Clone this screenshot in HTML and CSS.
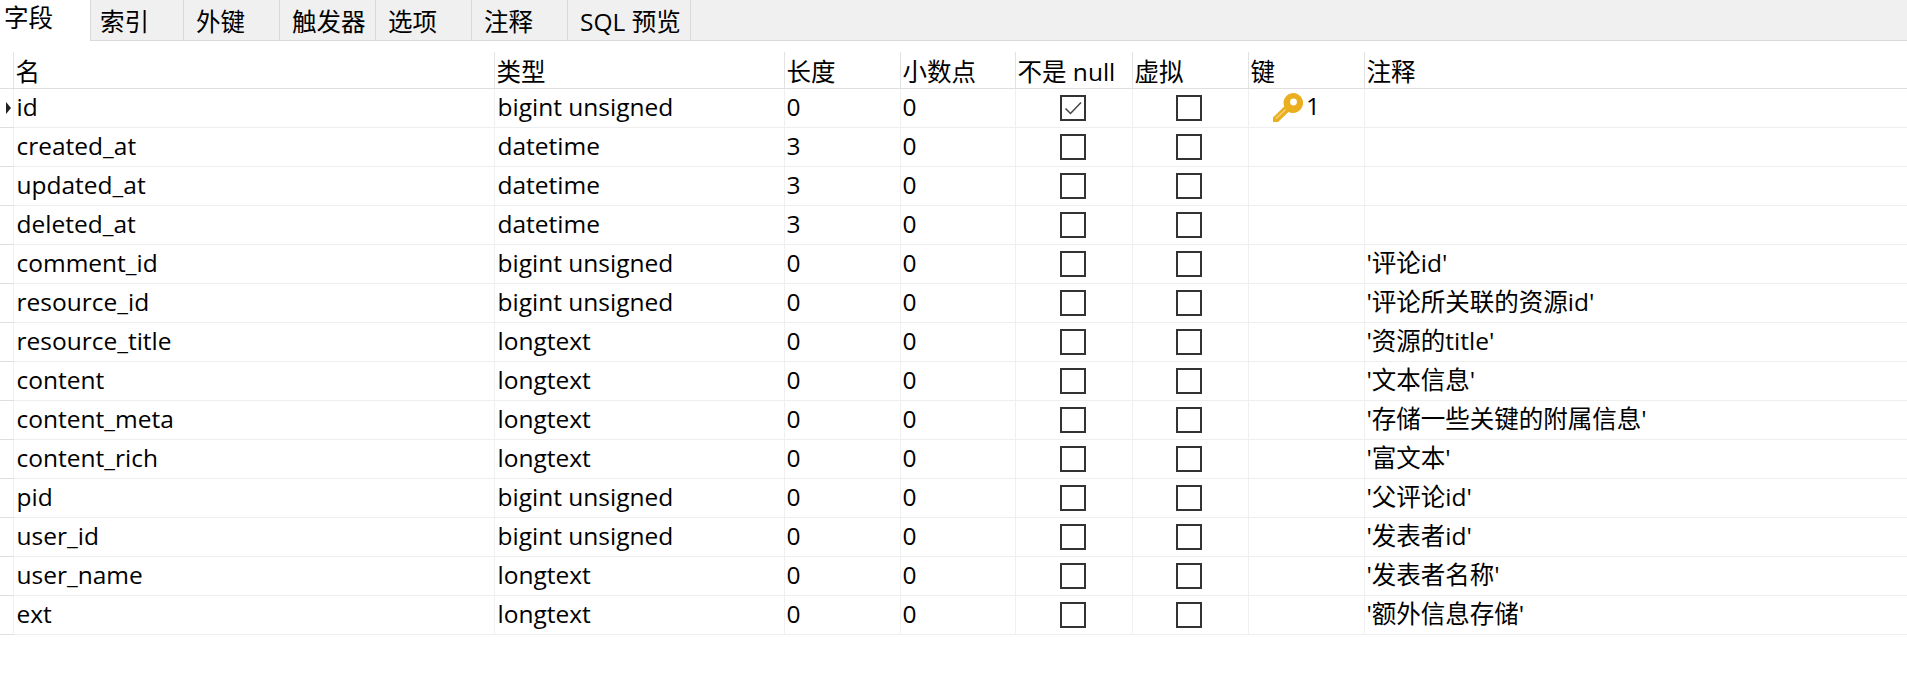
FILE: index.html
```html
<!DOCTYPE html>
<html lang="zh-CN">
<head>
  <meta charset="UTF-8" />
  <title>字段</title>
  <link rel="stylesheet" href="styles.css">
</head>
<body>
  <div class="tabs">
    <div class="tab active">字段</div>
    <div class="tab">索引</div>
    <div class="tab">外键</div>
    <div class="tab">触发器</div>
    <div class="tab">选项</div>
    <div class="tab">注释</div>
    <div class="tab wide">SQL 预览</div>
  </div>

  <table class="campos">
    <colgroup>
      <col class="c-mark"><col class="c-nome"><col class="c-tipo"><col class="c-len"><col class="c-dec">
      <col class="c-null"><col class="c-virt"><col class="c-key"><col>
    </colgroup>
    <thead>
      <tr>
        <th class="mark"></th><th>名</th><th>类型</th><th>长度</th><th>小数点</th><th>不是 null</th><th>虚拟</th><th>键</th><th>注释</th>
      </tr>
    </thead>
    <tbody>
      <tr>
        <td class="mark"><span class="seta"></span></td><td>id</td><td>bigint unsigned</td><td>0</td><td>0</td>
        <td class="chk"><span class="box"><svg width="22" height="22" viewBox="0 0 22 22"><path d="M3.5 11.5 L8.5 16.5 L19 5.5" fill="none" stroke="#444" stroke-width="1.5"/></svg></span></td>
        <td class="chk"><span class="box"></span></td>
        <td class="chave">
          <svg class="icon-key" width="30" height="29" viewBox="0 0 30 29">
            <path d="M20 0 A10 10 0 1 1 15.5 18.9 L5 29 H0 V24.5 L11.2 13.5 A10 10 0 0 1 20 0 Z" fill="#ebae1f"/>
            <circle cx="20.5" cy="9" r="3.4" fill="#fff"/>
            <path d="M3 25.5 L12.5 16.5" stroke="#f6d67e" stroke-width="1.2"/>
          </svg>
          <span>1</span>
        </td>
        <td></td>
      </tr>
      <tr><td class="mark"></td><td>created_at</td><td>datetime</td><td>3</td><td>0</td><td class="chk"><span class="box"></span></td><td class="chk"><span class="box"></span></td><td></td><td></td></tr>
      <tr><td class="mark"></td><td>updated_at</td><td>datetime</td><td>3</td><td>0</td><td class="chk"><span class="box"></span></td><td class="chk"><span class="box"></span></td><td></td><td></td></tr>
      <tr><td class="mark"></td><td>deleted_at</td><td>datetime</td><td>3</td><td>0</td><td class="chk"><span class="box"></span></td><td class="chk"><span class="box"></span></td><td></td><td></td></tr>
      <tr><td class="mark"></td><td>comment_id</td><td>bigint unsigned</td><td>0</td><td>0</td><td class="chk"><span class="box"></span></td><td class="chk"><span class="box"></span></td><td></td><td>'评论id'</td></tr>
      <tr><td class="mark"></td><td>resource_id</td><td>bigint unsigned</td><td>0</td><td>0</td><td class="chk"><span class="box"></span></td><td class="chk"><span class="box"></span></td><td></td><td>'评论所关联的资源id'</td></tr>
      <tr><td class="mark"></td><td>resource_title</td><td>longtext</td><td>0</td><td>0</td><td class="chk"><span class="box"></span></td><td class="chk"><span class="box"></span></td><td></td><td>'资源的title'</td></tr>
      <tr><td class="mark"></td><td>content</td><td>longtext</td><td>0</td><td>0</td><td class="chk"><span class="box"></span></td><td class="chk"><span class="box"></span></td><td></td><td>'文本信息'</td></tr>
      <tr><td class="mark"></td><td>content_meta</td><td>longtext</td><td>0</td><td>0</td><td class="chk"><span class="box"></span></td><td class="chk"><span class="box"></span></td><td></td><td>'存储一些关键的附属信息'</td></tr>
      <tr><td class="mark"></td><td>content_rich</td><td>longtext</td><td>0</td><td>0</td><td class="chk"><span class="box"></span></td><td class="chk"><span class="box"></span></td><td></td><td>'富文本'</td></tr>
      <tr><td class="mark"></td><td>pid</td><td>bigint unsigned</td><td>0</td><td>0</td><td class="chk"><span class="box"></span></td><td class="chk"><span class="box"></span></td><td></td><td>'父评论id'</td></tr>
      <tr><td class="mark"></td><td>user_id</td><td>bigint unsigned</td><td>0</td><td>0</td><td class="chk"><span class="box"></span></td><td class="chk"><span class="box"></span></td><td></td><td>'发表者id'</td></tr>
      <tr><td class="mark"></td><td>user_name</td><td>longtext</td><td>0</td><td>0</td><td class="chk"><span class="box"></span></td><td class="chk"><span class="box"></span></td><td></td><td>'发表者名称'</td></tr>
      <tr><td class="mark"></td><td>ext</td><td>longtext</td><td>0</td><td>0</td><td class="chk"><span class="box"></span></td><td class="chk"><span class="box"></span></td><td></td><td>'额外信息存储'</td></tr>
    </tbody>
  </table>
</body>
</html>
```
FILE: styles.css
```css
body {
  font-family: "Open Sans", "Noto Sans CJK SC", sans-serif;
  font-size: 24.5px;
  background-color: #fff;
  color: #000;
  margin: 0;
  overflow: hidden;
}

.tabs {
  display: flex;
  height: 41px;
  background-color: #f0f0f0;
  border-bottom: 1px solid #d9d9d9;
  box-sizing: border-box;
}

.tab {
  width: 96px;
  box-sizing: border-box;
  padding: 5px 0 0 12px;
  border-right: 1px solid #d9d9d9;
  line-height: 33px;
  white-space: nowrap;
}

.tab.active {
  width: 91px;
  height: 41px;
  padding: 1px 0 0 4px;
  background-color: #fff;
}

.active + .tab {
  width: 93px;
  padding-left: 9px;
}

.tab.wide {
  width: 123px;
}

.campos {
  border-collapse: collapse;
  table-layout: fixed;
  width: 1907px;
  margin-top: 11px;
  line-height: 30px;
}

.c-mark { width: 13px; }
.c-nome { width: 481px; }
.c-tipo { width: 290px; }
.c-len { width: 116px; }
.c-dec { width: 115px; }
.c-null { width: 117px; }
.c-virt { width: 116px; }
.c-key { width: 116px; }

th {
  height: 36px;
  box-sizing: border-box;
  padding: 4px 0 0 2px;
  font-weight: normal;
  text-align: left;
  border-left: 1px solid #e3e3e3;
  border-bottom: 1px solid #dfdfdf;
  white-space: nowrap;
}

td {
  height: 39px;
  box-sizing: border-box;
  padding: 0 0 2px 2px;
  border-left: 1px solid #f0f0f0;
  border-bottom: 1px solid #eee;
  white-space: nowrap;
}

td:nth-child(2), td:nth-child(3) {
  padding-left: 3px;
}

td.mark, th.mark {
  padding: 0;
  border-left: none;
  border-bottom-color: #dfdfdf;
}

.seta {
  display: block;
  width: 0;
  height: 0;
  margin-left: 6px;
  border-left: 5px solid #222;
  border-top: 6px solid transparent;
  border-bottom: 6px solid transparent;
}

td.chk {
  padding: 0 2px 4px 0;
  text-align: center;
}

.box {
  display: inline-block;
  width: 26px;
  height: 26px;
  box-sizing: border-box;
  border: 2px solid #333;
  vertical-align: middle;
}

.box svg {
  display: block;
}

td.chave {
  padding: 0 0 2px 24px;
}

.chave span {
  margin-left: -3px;
}

.icon-key {
  vertical-align: middle;
}
```
